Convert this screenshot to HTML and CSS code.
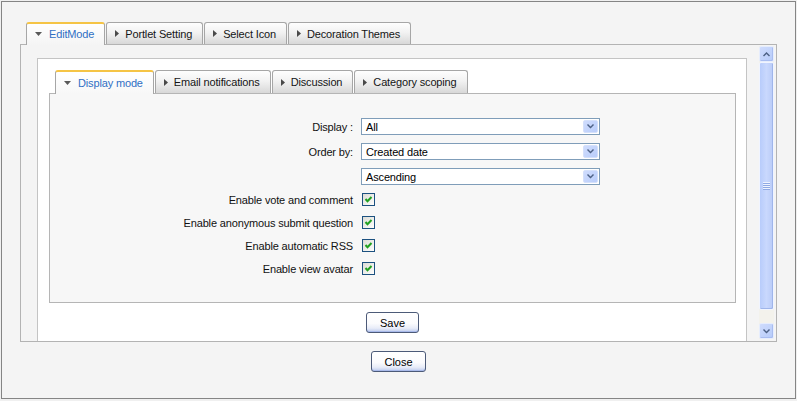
FILE: index.html
```html
<!DOCTYPE html>
<html lang="en">
<head>
<meta charset="utf-8">
<title>Edit Mode</title>
<link rel="stylesheet" href="styles.css">
</head>
<body>
<div class="window">
  <div class="tabs">
    <div class="tab active"><svg class="tri" width="7" height="4" viewBox="0 0 7 4"><polygon points="0,0 7,0 3.5,4" /></svg>EditMode</div>
    <div class="tab"><svg class="tri" width="4" height="7" viewBox="0 0 4 7"><polygon points="0,0 4,3.5 0,7" /></svg>Portlet Setting</div>
    <div class="tab"><svg class="tri" width="4" height="7" viewBox="0 0 4 7"><polygon points="0,0 4,3.5 0,7" /></svg>Select Icon</div>
    <div class="tab"><svg class="tri" width="4" height="7" viewBox="0 0 4 7"><polygon points="0,0 4,3.5 0,7" /></svg>Decoration Themes</div>
  </div>
  <div class="panel">
    <div class="panel-body">
      <div class="sheet">
        <div class="tabs inner-tabs">
          <div class="tab active"><svg class="tri" width="7" height="4" viewBox="0 0 7 4"><polygon points="0,0 7,0 3.5,4" /></svg>Display mode</div>
          <div class="tab"><svg class="tri" width="4" height="7" viewBox="0 0 4 7"><polygon points="0,0 4,3.5 0,7" /></svg>Email notifications</div>
          <div class="tab"><svg class="tri" width="4" height="7" viewBox="0 0 4 7"><polygon points="0,0 4,3.5 0,7" /></svg>Discussion</div>
          <div class="tab"><svg class="tri" width="4" height="7" viewBox="0 0 4 7"><polygon points="0,0 4,3.5 0,7" /></svg>Category scoping</div>
        </div>
        <div class="form-box">
          <div class="row">
            <div class="label">Display :</div>
            <div class="select"><span class="value">All</span><span class="drop"><svg width="7" height="5" viewBox="0 0 7 5"><polygon points="0,1 1,0 3.5,2.5 6,0 7,1 3.5,4.5" /></svg></span></div>
          </div>
          <div class="row">
            <div class="label">Order by:</div>
            <div class="select"><span class="value">Created date</span><span class="drop"><svg width="7" height="5" viewBox="0 0 7 5"><polygon points="0,1 1,0 3.5,2.5 6,0 7,1 3.5,4.5" /></svg></span></div>
          </div>
          <div class="row">
            <div class="label"></div>
            <div class="select"><span class="value">Ascending</span><span class="drop"><svg width="7" height="5" viewBox="0 0 7 5"><polygon points="0,1 1,0 3.5,2.5 6,0 7,1 3.5,4.5" /></svg></span></div>
          </div>
          <div class="row check">
            <div class="label">Enable vote and comment</div>
            <span class="checkbox"><svg width="11" height="11" viewBox="0 0 11 11"><polyline points="2.5,5 4.5,7.2 8.5,3" /></svg></span>
          </div>
          <div class="row check">
            <div class="label">Enable anonymous submit question</div>
            <span class="checkbox"><svg width="11" height="11" viewBox="0 0 11 11"><polyline points="2.5,5 4.5,7.2 8.5,3" /></svg></span>
          </div>
          <div class="row check">
            <div class="label">Enable automatic RSS</div>
            <span class="checkbox"><svg width="11" height="11" viewBox="0 0 11 11"><polyline points="2.5,5 4.5,7.2 8.5,3" /></svg></span>
          </div>
          <div class="row check">
            <div class="label">Enable view avatar</div>
            <span class="checkbox"><svg width="11" height="11" viewBox="0 0 11 11"><polyline points="2.5,5 4.5,7.2 8.5,3" /></svg></span>
          </div>
        </div>
        <div class="actions save-actions"><button class="btn btn-save">Save</button></div>
      </div>
    </div>
    <div class="scrollbar">
      <div class="sb-btn"><svg width="7" height="5" viewBox="0 0 7 5"><polygon points="0,3.5 1,4.5 3.5,2 6,4.5 7,3.5 3.5,0" /></svg></div>
      <div class="sb-thumb"><span class="grip"></span></div>
      <div class="sb-track"></div>
      <div class="sb-btn"><svg width="7" height="5" viewBox="0 0 7 5"><polygon points="0,1 1,0 3.5,2.5 6,0 7,1 3.5,4.5" /></svg></div>
    </div>
  </div>
  <div class="actions close-actions"><button class="btn btn-close">Close</button></div>
</div>
</body>
</html>
```

FILE: styles.css
```css
* { box-sizing: border-box; }
html, body { margin: 0; }
body {
  background: #f0f0f0;
  font-family: "Liberation Sans", Arial, sans-serif;
  font-size: 11px;
  letter-spacing: -0.15px;
  color: #000;
}
.window {
  margin: 1px;
  width: 795px;
  height: 398px;
  border: 1px solid #858585;
  background: #f4f4f4;
  padding: 20px 18px 0;
}

/* tabs */
.tabs {
  display: flex;
  align-items: flex-start;
  gap: 1px;
  padding-left: 6px;
  height: 23px;
  margin-bottom: -1px;
  position: relative;
  z-index: 1;
}
.tab {
  height: 22px;
  display: flex;
  align-items: center;
  padding: 0 10px 0 8px;
  border: 1px solid #a6a6a6;
  border-bottom: 0;
  border-radius: 3px 3px 0 0;
  background: linear-gradient(#fefefe, #f2f2f2 45%, #d8d8d8);
  color: #151515;
  white-space: nowrap;
}
.tab .tri { fill: #4a4a4a; margin-right: 6px; flex: none; }
.tab.active {
  height: 23px;
  border-top: 2px solid #f5c445;
  background: linear-gradient(#ffffff, #f4f4f4);
  color: #2f6fc4;
  padding-bottom: 1px;
}
.tab.active .tri { fill: #5a5a5a; margin-right: 7px; }
.inner-tabs { height: 24px; }
.inner-tabs .tab { height: 23px; }
.inner-tabs .tab.active { height: 24px; background: linear-gradient(#ffffff, #f7f7f7); }

/* outer panel */
.panel {
  height: 298px;
  border: 1px solid #b3b3b3;
  background: #f4f4f4;
  display: flex;
}
.panel-body {
  flex: 1;
  padding: 13px 12px 0 16px;
  display: flex;
  flex-direction: column;
  overflow: hidden;
}
.sheet {
  flex: 1;
  background: #fff;
  border: 1px solid #c4c4c4;
  border-bottom: 0;
  padding: 11px 10px 0 11px;
}

/* form */
.form-box {
  height: 210px;
  background: #f7f7f7;
  border: 1px solid #b5b5b5;
  padding-top: 24px;
}
.row {
  display: flex;
  align-items: center;
  height: 17px;
  margin-bottom: 8px;
}
.row.check { height: 13px; margin-bottom: 10px; }
.label {
  width: 303px;
  flex: none;
  text-align: right;
  color: #111;
  white-space: nowrap;
}
.select {
  margin-left: 8px;
  width: 239px;
  height: 17px;
  border: 1px solid #7f9db9;
  background: #fff;
  display: flex;
  align-items: center;
  justify-content: space-between;
  padding: 0 1px 0 4px;
}
.select .value { font-size: 11px; color: #000; }
.drop {
  width: 15px;
  height: 13px;
  border: 1px solid #d4e0fb;
  border-radius: 2px;
  background: linear-gradient(135deg, #cfdcfd, #b9cdfa);
  display: flex;
  align-items: center;
  justify-content: center;
}
.drop svg, .sb-btn svg { fill: #4d6185; display: block; }
.checkbox {
  margin-left: 9px;
  width: 13px;
  height: 13px;
  border: 1px solid #1c5180;
  background: linear-gradient(135deg, #dcdcd6, #f7f7f5 80%, #fff);
  display: flex;
}
.checkbox svg { fill: none; stroke: #21a121; stroke-width: 2; display: block; }

/* buttons */
.actions { display: flex; justify-content: center; }
.save-actions { padding-top: 9px; }
.close-actions { padding-top: 9px; }
.btn {
  font-family: "Liberation Sans", Arial, sans-serif;
  font-size: 11px;
  color: #000;
  height: 21px;
  padding: 0;
  border: 1px solid #4c5a78;
  border-radius: 3px;
  background: linear-gradient(#ffffff, #fbfbfd 55%, #e8ecf8 80%, #bccaee);
  box-shadow: inset 0 -1px 0 #a9baea, inset 0 1px 0 #fff;
}
.btn-save { width: 53px; }
.btn-close { width: 55px; }

/* scrollbar */
.scrollbar {
  width: 15px;
  margin: 1px 2px 2px 0;
  display: flex;
  flex-direction: column;
  background: #f3f2ec;
}
.sb-btn {
  height: 16px;
  flex: none;
  border: 1px solid #e6edfd;
  border-radius: 2px;
  background: linear-gradient(135deg, #cfdcfd, #b6cbf9);
  box-shadow: inset -1px -1px 0 #a9bdf0;
  display: flex;
  align-items: center;
  justify-content: center;
}
.sb-thumb {
  height: 248px;
  flex: none;
  border: 1px solid #f0f4ff;
  border-radius: 2px;
  background: linear-gradient(90deg, #b8ccfb, #c9d8fd 50%, #b9cbf7);
  box-shadow: inset -1px -1px 0 #9fb5ea;
  display: flex;
  align-items: center;
  justify-content: center;
}
.grip {
  width: 7px;
  height: 8px;
  background: repeating-linear-gradient(#eef3ff 0 1px, #8fa9e4 1px 2px);
}
.sb-track { flex: 1; }
```
